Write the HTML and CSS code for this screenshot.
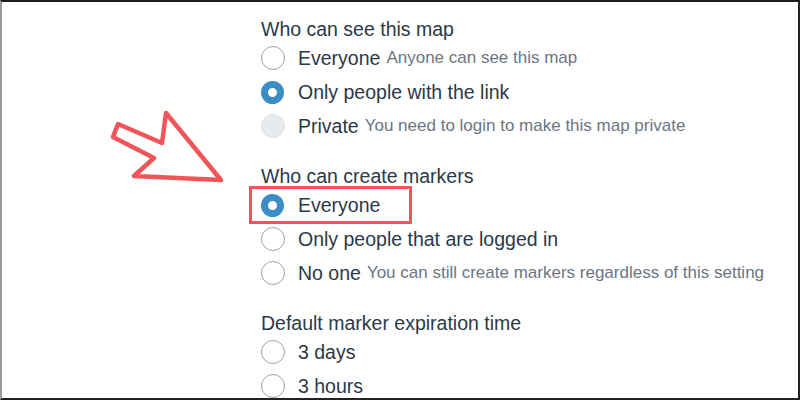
FILE: index.html
```html
<!DOCTYPE html>
<html>
	<head>
		<meta charset="UTF-8">
		<title>Map settings</title>
		<link rel="stylesheet" href="styles.css">
	</head>
	<body>
		<div class="frame">
			<div class="group">
				<div class="heading">Who can see this map</div>
				<label class="row"><span class="radio"></span>Everyone <small>Anyone can see this map</small></label>
				<label class="row"><span class="radio on"></span>Only people with the link</label>
				<label class="row"><span class="radio off"></span>Private <small>You need to login to make this map private</small></label>
			</div>
			<div class="group">
				<div class="heading">Who can create markers</div>
				<label class="row mark"><span class="radio on"></span>Everyone</label>
				<label class="row"><span class="radio"></span>Only people that are logged in</label>
				<label class="row"><span class="radio"></span>No one <small>You can still create markers regardless of this setting</small></label>
			</div>
			<div class="group">
				<div class="heading">Default marker expiration time</div>
				<label class="row"><span class="radio"></span>3 days</label>
				<label class="row"><span class="radio"></span>3 hours</label>
			</div>
			<svg class="arrow" width="800" height="400" viewBox="0 0 800 400">
				<polygon points="118,124 162,143 166,113 221,180 134,176 154,158 113,137" fill="none" stroke="#f0555a" stroke-width="4.5" stroke-linejoin="round"/>
			</svg>
		</div>
	</body>
</html>
```

FILE: styles.css
```css
*{margin: 0;padding: 0;box-sizing: border-box;}
body{font-family: "Liberation Sans", Arial, sans-serif;color: #2b3948;background: #fff;}
.frame{width: 800px;height: 400px;overflow: hidden;position: relative;
border-top: 2px solid #1c1c1c;border-left: 2px solid #9a9a9a;border-right: 2px solid #222;border-bottom: 2px solid #222;
padding: 15px 0 0 259px;}
.group{margin-bottom: 21px;}
.heading{font-size: 19.5px;line-height: 24px;}
.row{display: flex;align-items: center;height: 34px;font-size: 19.5px;white-space: nowrap;}
.row small{font-size: 17px;color: #6b7682;margin-left: 6px;}
.radio{width: 24px;height: 24px;border-radius: 50%;border: 1.5px solid #9ea4aa;background: #fff;margin-right: 13px;flex: none;}
.radio.on{border: 7.5px solid #3a8dc5;width: 23px;height: 23px;margin-right: 14px;}
.radio.off{background: #e8ebee;border-color: #dce0e4;}
.mark{width: fit-content;margin-left: -10px;padding: 0 30px 0 10px;outline: 3px solid #f0555a;outline-offset: -1px;}
.arrow{position: absolute;left: -2px;top: -2px;}
```
